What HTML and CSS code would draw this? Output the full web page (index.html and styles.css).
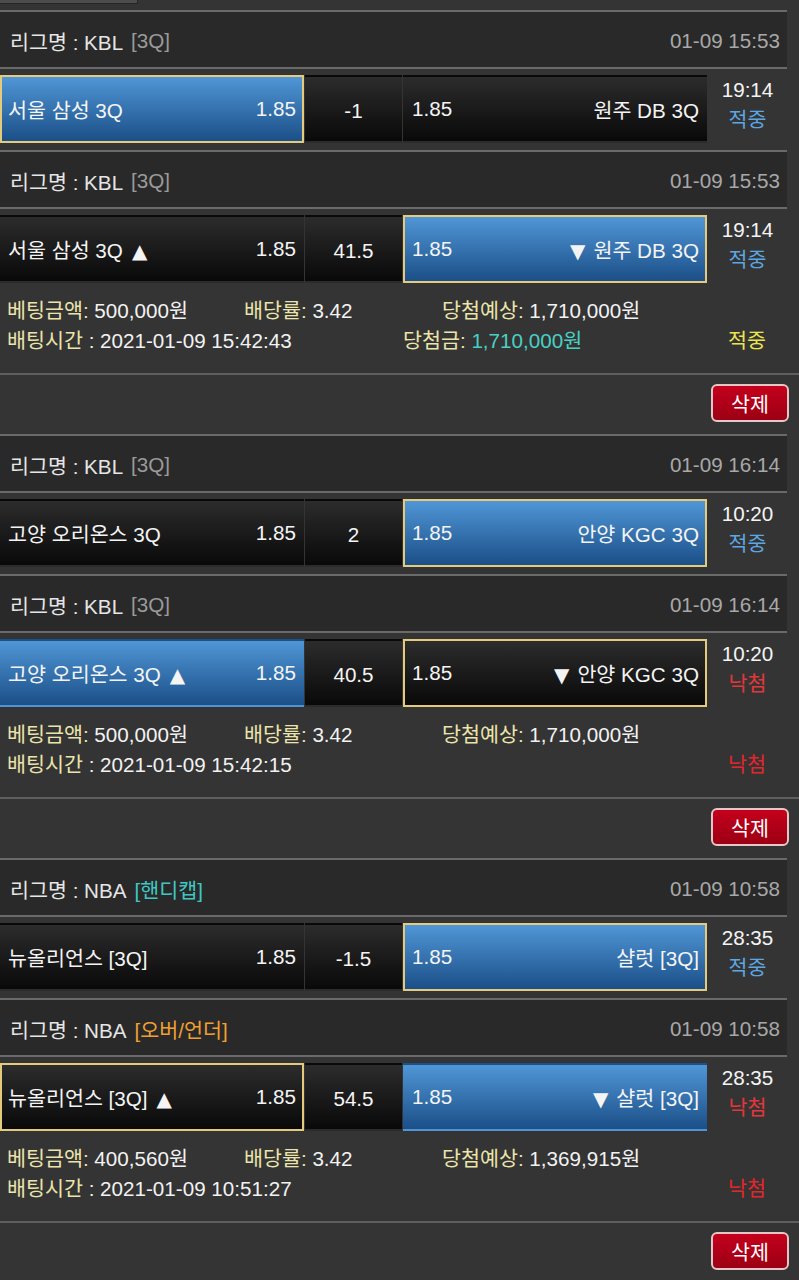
FILE: index.html
```html
<!DOCTYPE html>
<html lang="ko">
<head>
<meta charset="utf-8">
<title>베팅내역</title>
<link rel="stylesheet" href="styles.css">
</head>
<body>
<div class="top"><div class="top-tab"></div></div>

<div class="league"><span class="lg">리그명 : KBL</span><span class="tag">[3Q]</span><span class="date">01-09 15:53</span></div>
<div class="match">
  <div class="cell home win pick"><span>서울 삼성 3Q</span><span>1.85</span></div>
  <div class="cell mid">-1</div>
  <div class="cell away"><span>1.85</span><span>원주 DB 3Q</span></div>
  <div class="status"><span class="time">19:14</span><span class="res hit">적중</span></div>
</div>

<div class="league"><span class="lg">리그명 : KBL</span><span class="tag">[3Q]</span><span class="date">01-09 15:53</span></div>
<div class="match">
  <div class="cell home"><span>서울 삼성 3Q<span class="tri up">▲</span></span><span>1.85</span></div>
  <div class="cell mid">41.5</div>
  <div class="cell away win pick"><span>1.85</span><span><span class="tri dn">▼</span>원주 DB 3Q</span></div>
  <div class="status"><span class="time">19:14</span><span class="res hit">적중</span></div>
</div>
<div class="info">
  <div class="row"><span class="c1"><span class="lbl">베팅금액:</span> 500,000원</span><span class="c2"><span class="lbl">배당률:</span> 3.42</span><span class="c3"><span class="lbl">당첨예상:</span> 1,710,000원</span></div>
  <div class="row"><span class="d1"><span class="lbl">배팅시간</span> : 2021-01-09 15:42:43</span><span class="d2"><span class="lbl">당첨금:</span> <span class="teal">1,710,000원</span></span><span class="d3 won">적중</span></div>
</div>
<div class="actions"><button class="del">삭제</button></div>

<div class="league"><span class="lg">리그명 : KBL</span><span class="tag">[3Q]</span><span class="date">01-09 16:14</span></div>
<div class="match">
  <div class="cell home"><span>고양 오리온스 3Q</span><span>1.85</span></div>
  <div class="cell mid">2</div>
  <div class="cell away win pick"><span>1.85</span><span>안양 KGC 3Q</span></div>
  <div class="status"><span class="time">10:20</span><span class="res hit">적중</span></div>
</div>

<div class="league"><span class="lg">리그명 : KBL</span><span class="tag">[3Q]</span><span class="date">01-09 16:14</span></div>
<div class="match">
  <div class="cell home win"><span>고양 오리온스 3Q<span class="tri up">▲</span></span><span>1.85</span></div>
  <div class="cell mid">40.5</div>
  <div class="cell away pick"><span>1.85</span><span><span class="tri dn">▼</span>안양 KGC 3Q</span></div>
  <div class="status"><span class="time">10:20</span><span class="res miss">낙첨</span></div>
</div>
<div class="info">
  <div class="row"><span class="c1"><span class="lbl">베팅금액:</span> 500,000원</span><span class="c2"><span class="lbl">배당률:</span> 3.42</span><span class="c3"><span class="lbl">당첨예상:</span> 1,710,000원</span></div>
  <div class="row"><span class="d1"><span class="lbl">배팅시간</span> : 2021-01-09 15:42:15</span><span class="d2"></span><span class="d3 lost">낙첨</span></div>
</div>
<div class="actions"><button class="del">삭제</button></div>

<div class="league"><span class="lg">리그명 : NBA</span><span class="tag hc">[핸디캡]</span><span class="date">01-09 10:58</span></div>
<div class="match">
  <div class="cell home"><span>뉴올리언스 [3Q]</span><span>1.85</span></div>
  <div class="cell mid">-1.5</div>
  <div class="cell away win pick"><span>1.85</span><span>샬럿 [3Q]</span></div>
  <div class="status"><span class="time">28:35</span><span class="res hit">적중</span></div>
</div>

<div class="league"><span class="lg">리그명 : NBA</span><span class="tag ou">[오버/언더]</span><span class="date">01-09 10:58</span></div>
<div class="match">
  <div class="cell home pick"><span>뉴올리언스 [3Q]<span class="tri up">▲</span></span><span>1.85</span></div>
  <div class="cell mid">54.5</div>
  <div class="cell away win"><span>1.85</span><span><span class="tri dn">▼</span>샬럿 [3Q]</span></div>
  <div class="status"><span class="time">28:35</span><span class="res miss">낙첨</span></div>
</div>
<div class="info">
  <div class="row"><span class="c1"><span class="lbl">베팅금액:</span> 400,560원</span><span class="c2"><span class="lbl">배당률:</span> 3.42</span><span class="c3"><span class="lbl">당첨예상:</span> 1,369,915원</span></div>
  <div class="row"><span class="d1"><span class="lbl">배팅시간</span> : 2021-01-09 10:51:27</span><span class="d2"></span><span class="d3 lost">낙첨</span></div>
</div>
<div class="actions"><button class="del">삭제</button></div>
</body>
</html>
```
FILE: styles.css
```css
* { box-sizing: border-box; }
html, body { margin: 0; padding: 0; }
body {
  background: #343434;
  color: #f2f2f2;
  font-family: "Liberation Sans", "Noto Sans CJK KR", sans-serif;
  font-size: 20px;
  font-size-adjust: 0.545;
  width: 799px;
  overflow: hidden;
}
.top { height: 10px; }
.top-tab {
  width: 138px; height: 4px;
  background: #4c4c4c;
  border-bottom: 1px solid #262626;
  border-right: 1px solid #262626;
}
.league {
  width: 787px;
  height: 59px;
  background: #292929;
  border-top: 2px solid #6a6a6a;
  border-bottom: 2px solid #6a6a6a;
  display: flex;
  align-items: center;
  padding: 3px 7px 0 10px;
}
.league .lg { color: #e6e6e6; }
.league .tag { color: #9a9a9a; margin-left: 8px; }
.league .tag.hc { color: #3fc7c4; }
.league .tag.ou { color: #f0a032; }
.league .date { margin-left: auto; color: #a8a8a8; }

.match {
  width: 787px;
  height: 81px;
  padding: 6px 0 7px;
  display: flex;
  gap: 1px;
}
.cell {
  height: 68px;
  background: linear-gradient(#2c2c2c, #090909);
  border: 2px solid transparent;
  display: flex;
  align-items: center;
  justify-content: space-between;
  color: #f4f4f4;
  white-space: nowrap;
}
.tri {
  font-family: "DejaVu Sans", sans-serif;
  font-size-adjust: none;
  font-size: 20px;
}
.tri.up { margin-left: 9px; }
.tri.dn { margin-right: 8px; }
.cell.home { width: 304px; padding: 0 6px 0 6px; }
.cell.mid { width: 97px; justify-content: center; padding-top: 3px; }
.cell.away { width: 304px; padding: 0 6px 0 7px; }
.cell.win { background: linear-gradient(#5096d6, #1b4f88); }
.cell.pick { border-color: #e4ca7c; }
.status {
  flex: 1;
  display: flex;
  flex-direction: column;
  align-items: center;
  padding-top: 0;
  line-height: 30px;
}
.status .time { color: #f4f4f4; }
.res.hit { color: #5ca6e2; }
.res.miss { color: #e2373b; }

.info {
  width: 799px;
  height: 85px;
  border-bottom: 2px solid #5e5e5e;
  padding: 6px 12px 0 7px;
  line-height: 30px;
}
.row { display: flex; white-space: nowrap; }
.lbl { color: #ebe4ab; }
.c1 { width: 237px; }
.c2 { width: 198px; }
.d1 { width: 396px; }
.d2 { flex: 1; }
.d3 { width: 80px; text-align: center; }
.teal { color: #48d0c4; }
.won { color: #ece44e; }
.lost { color: #e2262c; }

.actions {
  width: 799px;
  height: 59px;
  display: flex;
  justify-content: flex-end;
  padding: 9px 10px 0 0;
}
.del {
  width: 78px;
  height: 38px;
  background: linear-gradient(#c4001c, #9c0014);
  border: 2px solid #e6c6c6;
  border-radius: 6px;
  color: #ffffff;
  font-family: "Liberation Sans", "Noto Sans CJK KR", sans-serif;
  font-size: 20px;
  font-size-adjust: 0.545;
  padding: 0;
}
```
